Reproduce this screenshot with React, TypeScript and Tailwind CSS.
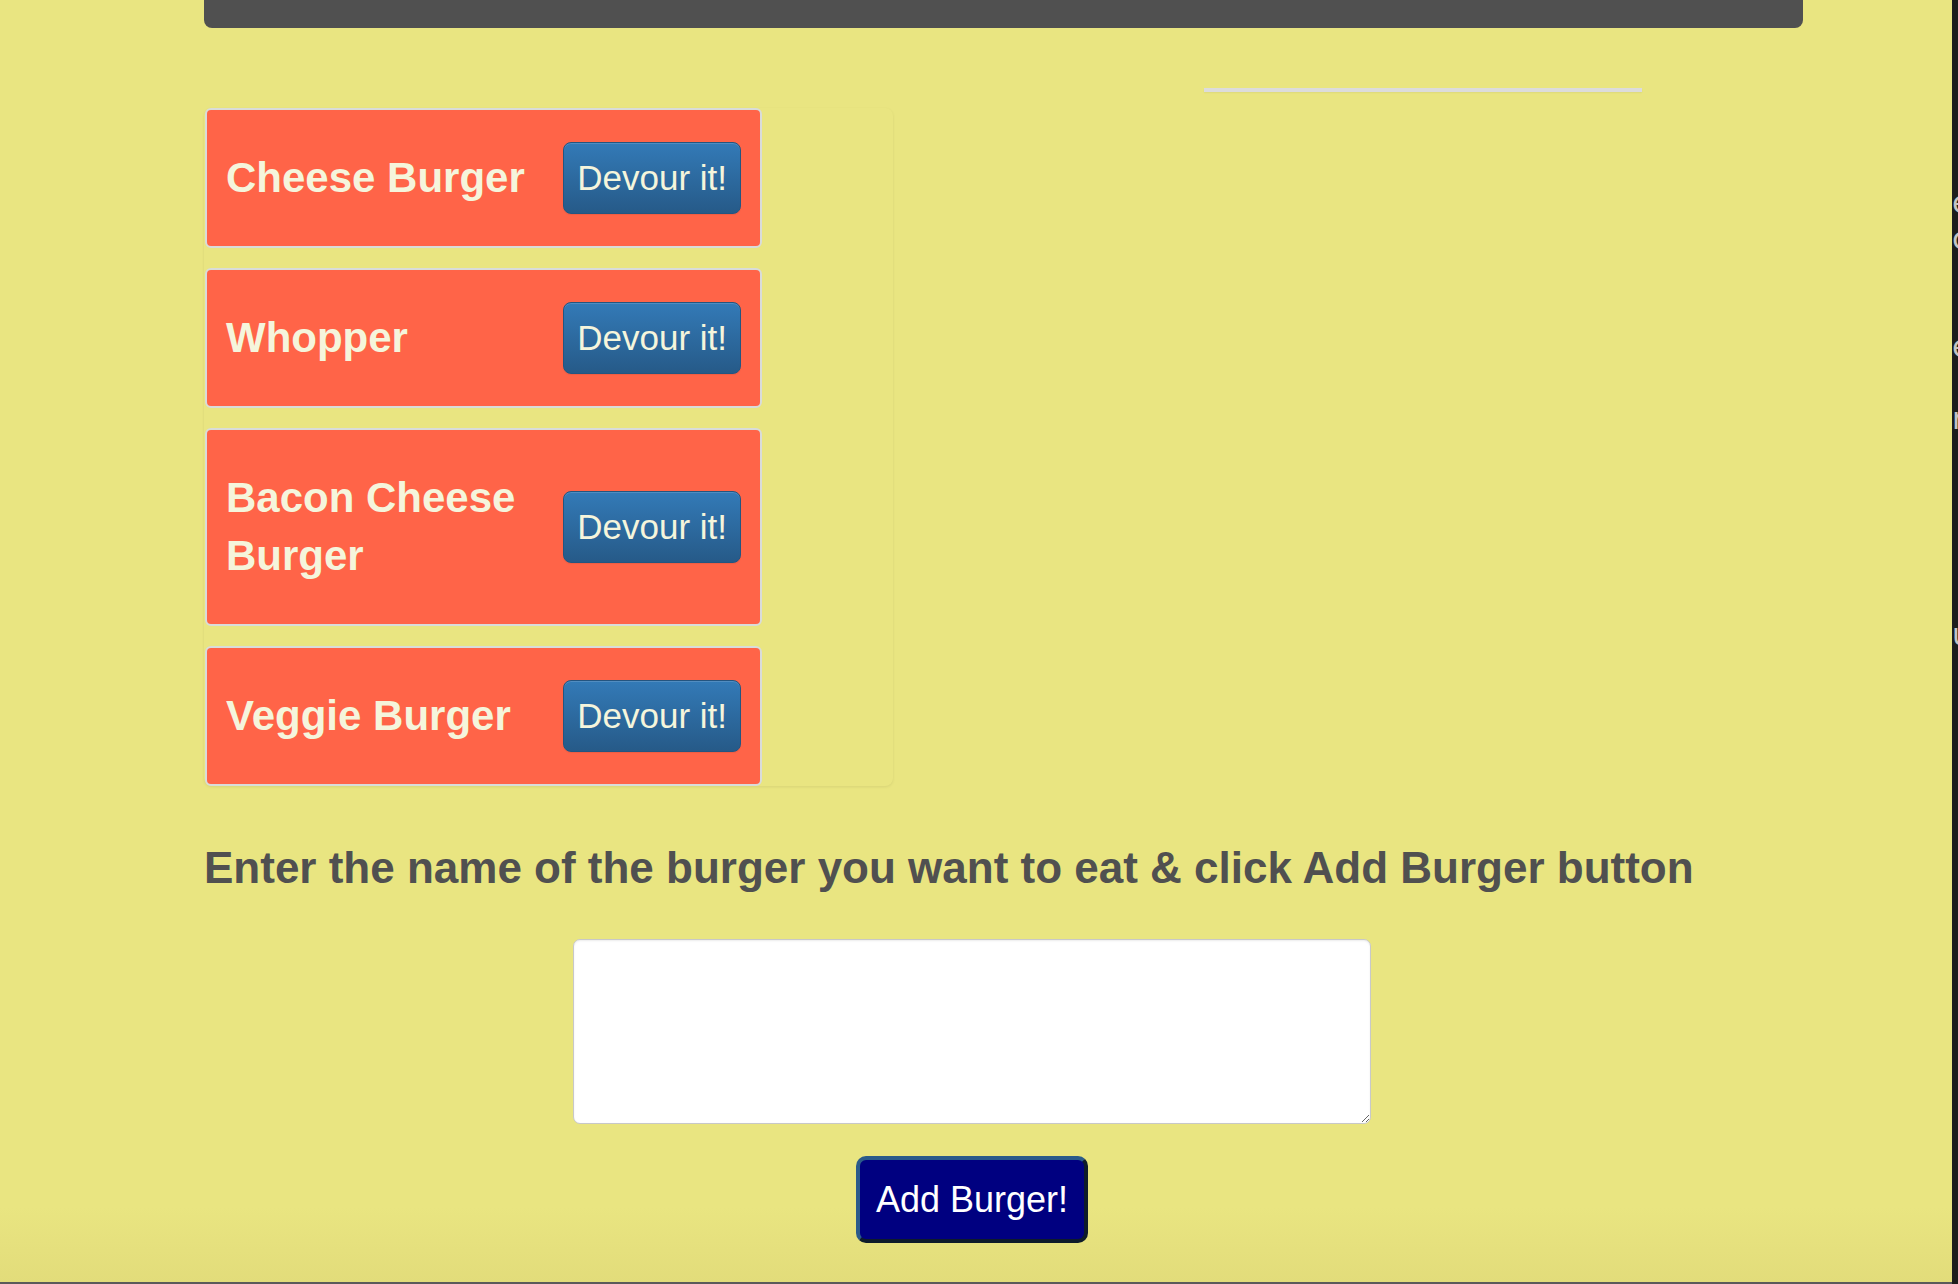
import { useState } from 'react';

const burgers = [
  { id: 1, name: 'Cheese Burger' },
  { id: 2, name: 'Whopper' },
  { id: 3, name: 'Bacon Cheese Burger' },
  { id: 4, name: 'Veggie Burger' },
];

// cropped dev-tools text on the right edge
const sideLines = [
  { text: 'elements', gap: 'mt-[185px]' },
  { text: 'console', gap: 'mt-0' },
  { text: 'element', gap: 'mt-[72px]' },
  { text: 'resources', gap: 'mt-[36px]' },
  { text: 'url', gap: 'mt-[180px]' },
];

function BurgerCard({ name }: { name: string }) {
  return (
    <div className="w-[557px] ml-[1px] flex items-center justify-between px-[19px] py-[32px] bg-[#ff6448] border-2 border-[#d9dcd9] rounded-[6px]">
      <h3 className="flex-1 my-[7px] mr-[20px] text-[42px] leading-[58px] font-bold text-[#f5f5dc]">{name}</h3>
      <button className="shrink-0 px-[13px] py-[10px] text-[35px] leading-[50px] text-[#f5f5dc] rounded-[8px] border border-[#245580] bg-[linear-gradient(to_bottom,#337ab7_0%,#265a88_100%)] shadow-[inset_0_1px_0_rgba(255,255,255,0.15),0_1px_1px_rgba(0,0,0,0.075)]">
        Devour it!
      </button>
    </div>
  );
}

export default function App() {
  const [yeniBurger, yeniBurgerAyarla] = useState('');

  return (
    <div className="w-[1958px] h-[1284px] overflow-hidden flex font-['Liberation_Sans',Arial,sans-serif]">
      <div className="flex-1 flex flex-col bg-[linear-gradient(to_bottom,#e9e581_0%,#e9e581_94%,#e2dc7a_100%)]">
        <div className="ml-[204px] w-[1599px] h-[28px] bg-[#505050] rounded-b-[8px]" />

        <div className="ml-[204px] mt-[60px] flex items-start">
          <div className="pt-[20px]">
            <div className="w-[689px] flex flex-col gap-[20px] rounded-[8px] shadow-[0_1px_3px_rgba(0,0,0,0.08)]">
              {burgers.map((b) => (
                <BurgerCard key={b.id} name={b.name} />
              ))}
            </div>
          </div>
          <div className="ml-[311px] w-[438px] h-[4px] bg-[#dcdcdc] shadow-[0_1px_2px_rgba(0,0,0,0.05)]" />
        </div>

        <h2 className="ml-[204px] mt-[58px] text-[44px] leading-[48px] font-bold text-[#505050]">
          Enter the name of the burger you want to eat &amp; click Add Burger button
        </h2>

        <div className="w-[1944px] mt-[47px] flex flex-col items-center">
          <textarea
            value={yeniBurger}
            onChange={(e) => yeniBurgerAyarla(e.target.value)}
            className="w-[798px] h-[185px] bg-white border border-[#c8c8c8] rounded-[7px] shadow-[inset_0_1px_2px_rgba(0,0,0,0.08)] outline-none p-2 text-[20px]"
          />
          <button className="mt-[32px] px-[16px] py-[14px] text-[36px] leading-[51px] text-white bg-[#000080] rounded-[10px] border-[4px] border-t-[#2b5b8a] border-l-[#2b5b8a] border-r-[#0e1b2a] border-b-[#0e1b2a]">
            Add Burger!
          </button>
        </div>

        <div className="flex-1" />
        <div className="h-[2px] bg-[#5a5a5a]" />
      </div>

      <div className="w-[6px] bg-[#1e1e1c] overflow-hidden flex flex-col">
        {sideLines.map((l) => (
          <div key={l.text} className={`${l.gap} whitespace-nowrap text-[30px] leading-[36px] text-[#c4c4c4] font-['DejaVu_Sans',sans-serif]`}>
            {l.text}
          </div>
        ))}
      </div>
    </div>
  );
}
